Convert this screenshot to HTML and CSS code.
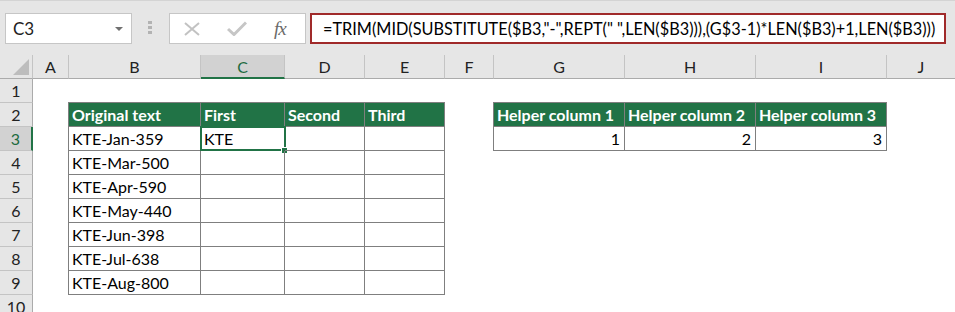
FILE: index.html
```html
<!DOCTYPE html>
<html lang="en">
<head>
  <meta charset="UTF-8" />
  <title>Split text with helper columns</title>
  <link rel="stylesheet" href="styles.css">
</head>
<body>

<div class="toolbar">
  <div class="namebox">
    <span>C3</span>
    <span class="caret"></span>
  </div>
  <div class="grip"><i></i><i></i><i></i></div>
  <div class="fxbox">
    <svg width="18" height="14" viewBox="0 0 18 14"><path d="M2 1 L16 13 M16 1 L2 13" stroke="#c2c2c2" stroke-width="2" fill="none"/></svg>
    <svg width="20" height="15" viewBox="0 0 20 15"><path d="M1 8 L7 13.5 L19 1.5" stroke="#c6c6c6" stroke-width="3" fill="none"/></svg>
    <span class="fx">fx</span>
  </div>
  <div class="formula">=TRIM(MID(SUBSTITUTE($B3,"-",REPT(" ",LEN($B3))),(G$3-1)*LEN($B3)+1,LEN($B3)))</div>
</div>

<div class="sheet">
  <div class="corner"><span class="tri"></span></div>

  <div class="colheads">
    <div class="ch" style="width:36px">A</div>
    <div class="ch" style="width:132px">B</div>
    <div class="ch sel" style="width:84px">C</div>
    <div class="ch" style="width:80px">D</div>
    <div class="ch" style="width:80px">E</div>
    <div class="ch" style="width:49px">F</div>
    <div class="ch" style="width:131px">G</div>
    <div class="ch" style="width:131px">H</div>
    <div class="ch" style="width:131px">I</div>
    <div class="ch" style="width:69px">J</div>
  </div>

  <div class="rowheads">
    <div class="rh">1</div>
    <div class="rh">2</div>
    <div class="rh sel">3</div>
    <div class="rh">4</div>
    <div class="rh">5</div>
    <div class="rh">6</div>
    <div class="rh">7</div>
    <div class="rh">8</div>
    <div class="rh">9</div>
    <div class="rh">10</div>
  </div>

  <div class="cells">
    <div class="grid data">
      <div class="c head">Original text</div>
      <div class="c head">First</div>
      <div class="c head">Second</div>
      <div class="c head">Third</div>

      <div class="c">KTE-Jan-359</div>
      <div class="c active">KTE<span class="selbox"></span><span class="handle"></span></div>
      <div class="c"></div>
      <div class="c"></div>

      <div class="c">KTE-Mar-500</div><div class="c"></div><div class="c"></div><div class="c"></div>
      <div class="c">KTE-Apr-590</div><div class="c"></div><div class="c"></div><div class="c"></div>
      <div class="c">KTE-May-440</div><div class="c"></div><div class="c"></div><div class="c"></div>
      <div class="c">KTE-Jun-398</div><div class="c"></div><div class="c"></div><div class="c"></div>
      <div class="c">KTE-Jul-638</div><div class="c"></div><div class="c"></div><div class="c"></div>
      <div class="c">KTE-Aug-800</div><div class="c"></div><div class="c"></div><div class="c"></div>
    </div>

    <div class="grid helper">
      <div class="c head">Helper column 1</div>
      <div class="c head">Helper column 2</div>
      <div class="c head">Helper column 3</div>
      <div class="c num">1</div>
      <div class="c num">2</div>
      <div class="c num">3</div>
    </div>
  </div>
</div>

</body>
</html>
```

FILE: styles.css
```css
* { margin: 0; padding: 0; box-sizing: border-box; }
body, html { width: 955px; height: 312px; overflow: hidden; }

body {
  background: #e6e6e6;
  font-family: Lato, "Liberation Sans", sans-serif;
  font-size: 16px;
  color: #000;
}

/* formula bar */
.toolbar {
  height: 55px;
  border-top: 1px solid #d4d4d4;
  padding-top: 12px;
  display: flex;
  align-items: flex-start;
}

.namebox {
  margin-left: 5px;
  width: 127px;
  height: 31px;
  background: #fff;
  border: 1px solid #c6c6c6;
  display: flex;
  align-items: center;
  justify-content: space-between;
  padding: 0 8px 0 7px;
  font-size: 17px;
  color: #222;
}

.caret {
  width: 0; height: 0;
  border-left: 4px solid transparent;
  border-right: 4px solid transparent;
  border-top: 4px solid #707070;
}

.grip {
  margin: 8px 0 0 16px;
  display: flex;
  flex-direction: column;
  gap: 2px;
}
.grip i { width: 4px; height: 3px; background: #b3b3b3; }

.fxbox {
  margin-left: 17px;
  width: 137px;
  height: 31px;
  background: #fff;
  border: 1px solid #c6c6c6;
  display: flex;
  align-items: center;
  padding: 0 0 0 13px;
  gap: 26px;
}

.fx {
  font-family: "Liberation Serif", serif;
  font-style: italic;
  font-size: 19px;
  color: #6a6a6a;
  margin-left: 1px;
  letter-spacing: -1px;
}

.formula {
  margin-left: 4px;
  width: 636px;
  height: 31px;
  background: #fff;
  border: 2px solid #a02a2a;
  padding-left: 11px;
  line-height: 27px;
  font-size: 16.3px;
  white-space: nowrap;
  overflow: hidden;
}

/* sheet */
.sheet {
  display: grid;
  grid-template-columns: 33px 1fr;
  grid-template-rows: 24px 1fr;
  height: 257px;
}

.corner {
  border-right: 1px solid #c4c4c4;
  border-bottom: 1px solid #ababab;
  position: relative;
}
.tri {
  position: absolute;
  left: 13px; top: 4px;
  width: 16px; height: 16px;
  background: #bdbdbd;
  clip-path: polygon(100% 0, 100% 100%, 0 100%);
}

.colheads { display: flex; }
.ch {
  flex: none;
  height: 24px;
  border-right: 1px solid #c4c4c4;
  border-bottom: 1px solid #ababab;
  text-align: center;
  line-height: 23px;
  font-size: 16px;
  color: #222;
}
.ch.sel {
  background: #d2d2d2;
  border-bottom: 2px solid #217346;
  color: #1d6b40;
}

.rowheads { display: flex; flex-direction: column; }
.rh {
  height: 24px;
  border-right: 1px solid #ababab;
  border-bottom: 1px solid #c4c4c4;
  text-align: center;
  line-height: 23px;
  font-size: 16px;
  color: #222;
}
.rh.sel {
  background: #d2d2d2;
  border-right: 2px solid #217346;
  color: #1d6b40;
}

.cells {
  background: #fff;
  display: flex;
  align-items: flex-start;
  padding-top: 23px;
}

.grid {
  display: grid;
  grid-auto-rows: 24px;
  border-top: 1px solid #7f7f7f;
  border-left: 1px solid #7f7f7f;
}
.data { margin-left: 35px; grid-template-columns: 132px 84px 80px 80px; }
.helper { margin-left: 48px; grid-template-columns: 131px 131px 131px; }

.c {
  border-right: 1px solid #7f7f7f;
  border-bottom: 1px solid #7f7f7f;
  padding: 0 4px 0 3px;
  line-height: 24px;
  white-space: nowrap;
  position: relative;
}
.c.head {
  background: #217346;
  color: #fff;
  font-weight: bold;
}
.c.num { text-align: right; }

.selbox {
  position: absolute;
  left: -1px; top: -1px; right: -2px; bottom: -1px;
  border: 2px solid #217346;
}
.handle {
  position: absolute;
  right: -4px; bottom: -4px;
  width: 7px; height: 7px;
  background: #217346;
  border: 1px solid #fff;
}
```
